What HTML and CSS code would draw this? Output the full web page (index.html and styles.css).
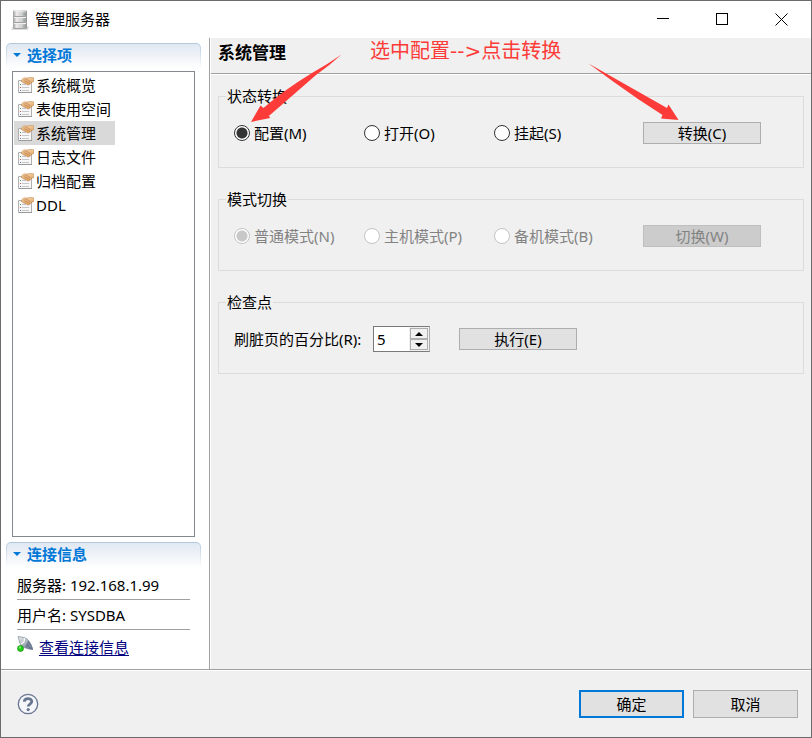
FILE: index.html
```html
<!DOCTYPE html>
<html lang="zh-CN">
<head>
<meta charset="utf-8">
<title>管理服务器</title>
<link rel="stylesheet" href="styles.css">
</head>
<body>
<svg class="defs" width="0" height="0" aria-hidden="true">
  <defs>
    <linearGradient id="skin" x1="0" y1="0" x2="0" y2="1"><stop offset="0" stop-color="#f6cf9e"/><stop offset="1" stop-color="#d8975a"/></linearGradient>
    <linearGradient id="metal" x1="0" y1="0" x2="1" y2="0"><stop offset="0" stop-color="#9c9c9c"/><stop offset=".25" stop-color="#e9e9e9"/><stop offset=".65" stop-color="#cfcfcf"/><stop offset="1" stop-color="#909090"/></linearGradient>
    <linearGradient id="plug" x1="0" y1="0" x2="1" y2="1"><stop offset="0" stop-color="#eef2f4"/><stop offset=".5" stop-color="#a9b2bb"/><stop offset="1" stop-color="#52607c"/></linearGradient>
    <symbol id="props" viewBox="0 0 16 16">
      <path d="M.5 3.500h13v12H.5z" fill="#f7f7f7" stroke="#b0b0b0"/>
      <path d="M1 15.500h13" stroke="#999"/>
      <path d="M2 7.500h1" stroke="#3f9e4a"/>
      <path d="M2 10.500h1" stroke="#c05050"/>
      <path d="M2 13.500h1" stroke="#4c78c0"/>
      <path d="M4 7.500h4M4 10.500h7M4 13.500h7" stroke="#c3c6ca"/>
      <path d="M3.500 3 6 .8l3 .4 2.500-.7 4.300.3v3.700l-2.300.8-1.500 2-2.200.6-2-1.200-2-.7L3.500 4.500z" fill="url(#skin)" stroke="#c08a55" stroke-width=".6"/>
      <path d="M6 3.500 8.500 2l4 3M7 5l1.500-1 2 2" fill="none" stroke="#b67c48" stroke-width=".6"/>
    </symbol>
  </defs>
</svg>
<div class="window">
  <header class="titlebar">
    <svg class="app-icon" viewBox="0 0 18 20" aria-hidden="true">
      <path d="M0 20h17l1-3-2-1H2z" fill="#dcdcdc"/>
      <path d="M2 1.500Q2 0 4 0h10q2 0 2 1.500v16q0 1.500-2 1.500H4q-2 0-2-1.500z" fill="url(#metal)"/>
      <path d="M3 1h12" stroke="#f2f2f2"/>
      <path d="M2 6.500h14M2 12.500h14M3 18.500h12" stroke="#a2a2a2"/>
      <path d="M3 7.500h12M3 13.500h12" stroke="#f1f1f1"/>
      <path d="M12 4.500h2M12 10.500h2M12 16.500h2" stroke="#7fb585"/>
    </svg>
    <h1 class="title">管理服务器</h1>
    <div class="window-controls">
      <button type="button" aria-label="最小化"><svg width="13" height="13"><path d="M0 5.500h12"/></svg></button>
      <button type="button" aria-label="最大化"><svg width="13" height="13"><path d="M.5.5h11v11H.5z"/></svg></button>
      <button type="button" aria-label="关闭"><svg width="13" height="13"><path class="smooth" d="m.5.5 12 12m0-12-12 12"/></svg></button>
    </div>
  </header>

  <div class="body">
    <aside class="sidebar">
      <h2 class="section-head"><span class="twistie"></span>选择项</h2>
      <nav class="list">
        <button type="button" class="item"><svg><use href="#props"/></svg>系统概览</button>
        <button type="button" class="item"><svg><use href="#props"/></svg>表使用空间</button>
        <button type="button" class="item selected" aria-current="page"><svg><use href="#props"/></svg>系统管理</button>
        <button type="button" class="item"><svg><use href="#props"/></svg>日志文件</button>
        <button type="button" class="item"><svg><use href="#props"/></svg>归档配置</button>
        <button type="button" class="item"><svg><use href="#props"/></svg>DDL</button>
      </nav>
      <h2 class="section-head"><span class="twistie"></span>连接信息</h2>
      <div class="connection">
        <p class="info">服务器: 192.168.1.99</p>
        <p class="info">用户名: SYSDBA</p>
        <div class="link-row">
          <svg class="plug" viewBox="0 0 16 16" aria-hidden="true">
            <path d="M1 .5 7 1.500q2.500.5 4.500 3L14 8.500l2 5-4-.5-5-1.500q-2.500-1-4-4z" fill="url(#plug)" stroke="#8a949d" stroke-width=".8"/>
            <path d="m7.500 2-.5 4-3 2" fill="none" stroke="#fff" stroke-width="1.200"/>
            <path d="m8 11 3.500-6.500L14 8.500l2 5-4-.5z" fill="#6a7690"/>
            <path d="m9 9.500 3 3M10.500 7l3.500 4" stroke="#98a3b5" stroke-width=".7"/>
            <circle cx="3.500" cy="12.500" r="3" fill="#25cf18" stroke="#138a0c" stroke-width=".7"/>
            <circle cx="3" cy="11.500" r="1" fill="#8df582"/>
          </svg>
          <a href="#connection">查看连接信息</a>
        </div>
      </div>
    </aside>

    <main class="content">
      <h2 class="page-head">系统管理</h2>
      <form class="groups">
        <fieldset class="group">
          <legend>状态转换</legend>
          <div class="options">
            <label><input type="radio" name="state" checked>配置(M)</label>
            <label><input type="radio" name="state">打开(O)</label>
            <label><input type="radio" name="state">挂起(S)</label>
            <button type="button" class="btn">转换(C)</button>
          </div>
        </fieldset>
        <fieldset class="group" disabled>
          <legend>模式切换</legend>
          <div class="options">
            <label><input type="radio" name="mode" checked>普通模式(N)</label>
            <label><input type="radio" name="mode">主机模式(P)</label>
            <label><input type="radio" name="mode">备机模式(B)</label>
            <button type="button" class="btn">切换(W)</button>
          </div>
        </fieldset>
        <fieldset class="group">
          <legend>检查点</legend>
          <div class="checkpoint">
            <label for="percent">刷脏页的百分比(R):</label>
            <div class="spinner">
              <input id="percent" type="text" inputmode="numeric" value="5">
              <div class="steps">
                <button type="button" aria-label="增加"><svg width="8" height="4"><path d="M0 4 4 0l4 4z"/></svg></button>
                <button type="button" aria-label="减少"><svg width="8" height="4"><path d="m0 0 4 4 4-4z"/></svg></button>
              </div>
            </div>
            <button type="button" class="btn">执行(E)</button>
          </div>
        </fieldset>
      </form>
      <p class="note">选中配置--&gt;点击转换</p>
      <svg class="arrow arrow-left" viewBox="0 0 92 68" aria-hidden="true"><path d="M91.500.5Q79 12 66 21 42 42 20 61l-1 .500 1 2.500L1 68 10.500 51.500l3 2.500Q34 36 62 19 78 10 91.500.5z"/></svg>
      <svg class="arrow arrow-right" viewBox="0 0 92 58" aria-hidden="true"><path d="M.5.5 79 45l1.500-3.500L90.500 57 73 55.500l1.500-3.500L50 36Q24 18 .5.5z"/></svg>
    </main>
  </div>

  <footer class="footer">
    <button type="button" class="help" aria-label="帮助">
      <svg viewBox="0 0 22 22"><circle cx="11" cy="11" r="9.700" fill="#f4f6fa" stroke="#68778f" stroke-width="1.300"/><path d="M7.300 8.800C7.300 4.500 14.900 4.600 14.800 8.600c0 2.400-3.600 2.500-3.600 5" fill="none" stroke="#68778f" stroke-width="2.800"/><circle cx="11.200" cy="16.600" r="1.600" fill="#68778f"/></svg>
    </button>
    <div class="actions">
      <button type="button" class="btn primary">确定</button>
      <button type="button" class="btn">取消</button>
    </div>
  </footer>
</div>
</body>
</html>
```

FILE: styles.css
```css
* { box-sizing: border-box; }

body {
  margin: 0;
  color: #000;
  font: 15px/20px "Noto Sans", "Noto Sans CJK SC", sans-serif;
}

h1, h2, p { margin: 0; font-size: inherit; font-weight: normal; }
button, input { margin: 0; color: inherit; font: inherit; }
button { padding: 0; border: 0; background: none; }
svg { display: block; flex: none; }
.defs { position: absolute; }

.window {
  display: flex;
  flex-direction: column;
  min-height: 100vh;
  border: 1px solid #6b6b6b;
  background: #f0f0f0;
}

/* Title bar */
.titlebar {
  display: flex;
  align-items: center;
  height: 37px;
  padding-left: 10px;
  background: #fff;
}
.app-icon { width: 18px; height: 20px; }
.title { flex: 1; padding: 0 0 2px 6px; }
.window-controls { display: flex; height: 100%; }
.window-controls button { display: grid; place-items: center; width: 59px; }
.window-controls path { fill: none; stroke: #000; shape-rendering: crispEdges; }
.window-controls .smooth { shape-rendering: auto; }

.body { display: flex; flex: 1; }

/* Sidebar */
.sidebar {
  display: flex;
  flex-direction: column;
  width: 209px;
  padding: 5px 8px 12px 5px;
  border-right: 1px solid #a0a0a0;
  background: #fff;
}
.section-head {
  display: flex;
  align-items: center;
  gap: 6px;
  height: 26px;
  padding: 0 0 4px 6px;
  border: solid transparent;
  border-width: 1px 1px 0;
  border-radius: 5px 5px 0 0;
  background:
    linear-gradient(#e0e8f2, #fff) padding-box,
    linear-gradient(#b3c8dd, #fff) border-box;
  color: #0078d7;
  font-weight: bold;
}
.twistie {
  border: solid transparent;
  border-width: 4px 4px 0;
  border-top-color: #0078d7;
}
.list {
  flex: 1;
  margin: 2px 6px 5px;
  padding: 1px;
  border: 1px solid #828790;
}
.item {
  display: flex;
  align-items: center;
  gap: 2px;
  width: 101px;
  height: 24px;
  padding-left: 4px;
  white-space: nowrap;
}
.item svg { width: 16px; height: 16px; }
.selected { background: #d9d9d9; }
.connection { padding: 2px 11px 0; }
.info { height: 30px; padding-top: 5px; border-bottom: 1px solid #a0a0a0; }
.link-row { display: flex; gap: 6px; padding-top: 6px; }
.link-row a { padding-top: 1px; color: #000080; text-underline-offset: 2px; }
.plug { width: 16px; height: 16px; }

/* Content */
.content {
  position: relative;
  flex: 1;
  border-left: 1px solid #fff;
}
.page-head {
  padding: 5px 7px 10px;
  border-bottom: 1px solid #a0a0a0;
  box-shadow: 0 1px #fff;
  font-size: 17px;
  font-weight: bold;
}
.groups {
  display: flex;
  flex-direction: column;
  gap: 21px;
  padding: 12px 7px;
}
.group {
  min-width: 0;
  height: 82px;
  margin: 0;
  padding: 14px 42px 0 15px;
  border: 1px solid #dcdcdc;
}
.group:disabled { color: #838383; }
legend { margin-left: -8px; padding: 0 1px; color: #000; }
.options {
  display: grid;
  grid-template-columns: 130px 130px 1fr 118px;
  align-items: center;
  height: 26px;
}
.options label { display: flex; align-items: center; gap: 4px; }
.options input {
  appearance: none;
  width: 16px;
  height: 16px;
  border: 1px solid #333;
  border-radius: 50%;
  background: #fff;
}
.options input:checked { background: radial-gradient(circle, #333 5px, #fff 6px); }
.options input:disabled { border-color: #c4c4c4; }
.options input:disabled:checked { background: radial-gradient(circle, #c8c8c8 5px, #fff 6px); }

.btn {
  width: 118px;
  height: 22px;
  border: 1px solid #adadad;
  background: #e1e1e1;
  line-height: 20px;
}
.btn:disabled { border-color: #bfbfbf; background: #ccc; }

.checkpoint { display: flex; align-items: center; height: 26px; }
.checkpoint label { min-width: 139px; white-space: nowrap; }
.spinner {
  display: flex;
  width: 57px;
  height: 26px;
  margin-right: 29px;
  border: 1px solid #7a7a7a;
  border-right-color: #adadad;
  background: #fff;
}
.spinner input { width: 35px; padding: 0 3px; border: 0; background: none; outline: 0; }
.steps { display: grid; grid-template-rows: 1fr 1fr; flex: 1; padding: 1px; background: #f0f0f0; }
.steps button { display: grid; place-items: center; border: 1px solid #adadad; }

/* Annotation over the form */
.note {
  position: absolute;
  top: 0;
  left: 159px;
  color: #fd3b38;
  font: 20px/26px "DejaVu Sans", "Noto Sans CJK SC", sans-serif;
  white-space: nowrap;
}
.arrow { position: absolute; width: 92px; fill: #fd3b38; }
.arrow-left { top: 16px; left: 39px; height: 68px; }
.arrow-right { top: 25px; left: 377px; height: 58px; }

/* Footer */
.footer {
  display: flex;
  align-items: center;
  justify-content: space-between;
  height: 68px;
  padding: 0 13px 0 16px;
  border-top: 1px solid #a0a0a0;
  box-shadow: inset 0 1px #fff;
}
.help svg { width: 22px; height: 22px; }
.actions { display: flex; gap: 9px; }
.actions .btn { width: 105px; height: 28px; }
.actions .primary { border: 2px solid #0078d7; }
```
